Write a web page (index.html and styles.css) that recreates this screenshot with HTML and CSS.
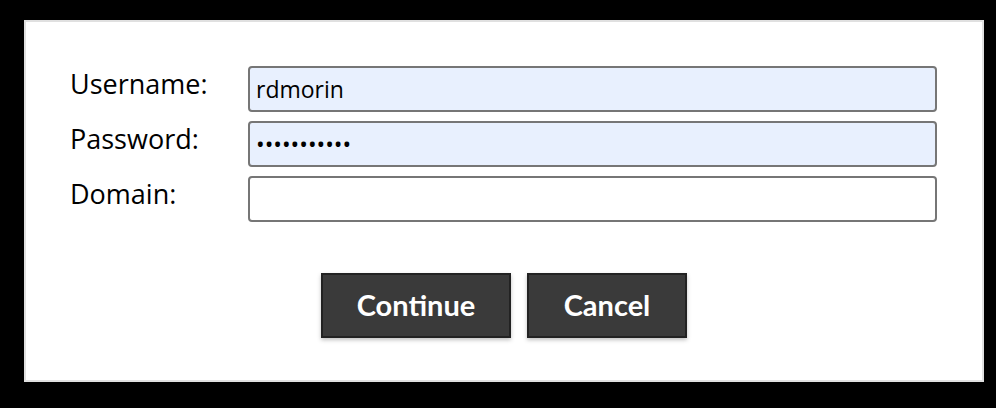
FILE: index.html
```html
<!DOCTYPE html>
<html>
<head>
<meta charset="utf-8">
<link rel="stylesheet" href="styles.css">
</head>
<body>
<div class="panel">
  <form class="form">
    <div class="fields">
      <label class="label" for="u">Username:</label>
      <input class="input filled" id="u" type="text" value="rdmorin">
      <label class="label" for="p">Password:</label>
      <input class="input filled" id="p" type="password" value="abcdefghijk">
      <label class="label" for="d">Domain:</label>
      <input class="input" id="d" type="text" value="">
    </div>
    <div class="actions">
      <button type="button" class="btn btn-continue">Continue</button>
      <button type="button" class="btn btn-cancel">Cancel</button>
    </div>
  </form>
</div>
</body>
</html>
```
FILE: styles.css
```css
html, body {
  margin: 0;
  padding: 0;
  background: #000;
}
body {
  width: 996px;
  height: 408px;
  padding: 20px 0 0 24px;
  box-sizing: border-box;
}
.panel {
  width: 960px;
  height: 362px;
  box-sizing: border-box;
  background: #fff;
  border: 2px solid #e0e0e0;
  padding: 44px 0 0 44px;
}
.fields {
  display: grid;
  grid-template-columns: 178px 689px;
  row-gap: 9px;
  align-items: center;
}
.label {
  font-family: "Open Sans", "Noto Sans", sans-serif;
  font-size: 27px;
  color: #000;
  line-height: 46px;
  height: 46px;
  margin-top: -10px;
}
.input {
  height: 46px;
  box-sizing: border-box;
  border: 2px solid #767676;
  border-radius: 4px;
  background: #fff;
  padding: 0 6px;
  font-family: "Open Sans", "Noto Sans", sans-serif;
  font-size: 23px;
  color: #000;
  outline: none;
  margin: 0;
}
.input.filled {
  background: #e8f0fe;
}
.actions {
  display: flex;
  justify-content: center;
  gap: 16px;
  margin-top: 51px;
  padding-right: 44px;
}
.btn {
  height: 65px;
  box-sizing: border-box;
  background: #3a3a3a;
  border: 2px solid #222;
  color: #fff;
  font-family: Lato, "Liberation Sans", sans-serif;
  font-weight: 700;
  font-size: 29px;
  box-shadow: 0 2px 4px rgba(0,0,0,0.25);
  padding: 0 0 3px;
  cursor: pointer;
}
.btn-continue { width: 190px; }
.btn-cancel { width: 160px; }
```
